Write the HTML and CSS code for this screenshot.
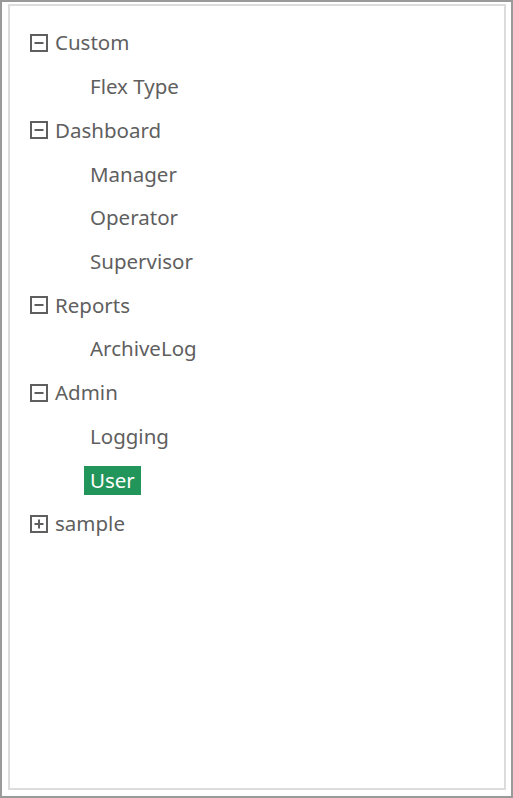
FILE: index.html
```html
<!DOCTYPE html>
<html>
<head>
<meta charset="utf-8">
<link rel="stylesheet" href="styles.css">
</head>
<body>
<div class="frame">
  <div class="tree">
    <div class="node"><svg class="toggle" viewBox="0 0 18 18"><rect x="1" y="1" width="16" height="16"/><line x1="4.5" y1="9" x2="13.5" y2="9"/></svg><span class="label">Custom</span></div>
    <div class="node child"><span class="label">Flex Type</span></div>
    <div class="node"><svg class="toggle" viewBox="0 0 18 18"><rect x="1" y="1" width="16" height="16"/><line x1="4.5" y1="9" x2="13.5" y2="9"/></svg><span class="label">Dashboard</span></div>
    <div class="node child"><span class="label">Manager</span></div>
    <div class="node child"><span class="label">Operator</span></div>
    <div class="node child"><span class="label">Supervisor</span></div>
    <div class="node"><svg class="toggle" viewBox="0 0 18 18"><rect x="1" y="1" width="16" height="16"/><line x1="4.5" y1="9" x2="13.5" y2="9"/></svg><span class="label">Reports</span></div>
    <div class="node child"><span class="label">ArchiveLog</span></div>
    <div class="node"><svg class="toggle" viewBox="0 0 18 18"><rect x="1" y="1" width="16" height="16"/><line x1="4.5" y1="9" x2="13.5" y2="9"/></svg><span class="label">Admin</span></div>
    <div class="node child"><span class="label">Logging</span></div>
    <div class="node child"><span class="label selected">User</span></div>
    <div class="node"><svg class="toggle" viewBox="0 0 18 18"><rect x="1" y="1" width="16" height="16"/><line x1="4.5" y1="9" x2="13.5" y2="9"/><line x1="9" y1="4.5" x2="9" y2="13.5"/></svg><span class="label">sample</span></div>
  </div>
</div>
</body>
</html>
```
FILE: styles.css
```css
html, body {
  margin: 0;
  padding: 0;
  background: #fff;
}
body {
  width: 513px;
  height: 798px;
  box-sizing: border-box;
  border: 2px solid #9a9a9a;
  padding: 2px 5px 6px 6px;
  font-family: "Noto Sans", "Open Sans", sans-serif;
  font-size: 20.5px;
  color: #5f5f5f;
}
.frame {
  height: 100%;
  box-sizing: border-box;
  border: 2px solid #dcdcdc;
  padding-top: 15px;
  padding-left: 20px;
}
.tree {
  display: flex;
  flex-direction: column;
}
.node {
  height: 43.73px;
  display: flex;
  align-items: center;
}
.child {
  padding-left: 54px;
}
.toggle {
  width: 18px;
  height: 18px;
  margin-right: 7px;
  fill: none;
  stroke: #5f5f5f;
  stroke-width: 2;
  flex: none;
}
.label {
  line-height: 29px;
  padding: 0 6px;
}
.toggle + .label {
  padding-left: 0;
}
.selected {
  background: #22955a;
  color: #fff;
}
```
